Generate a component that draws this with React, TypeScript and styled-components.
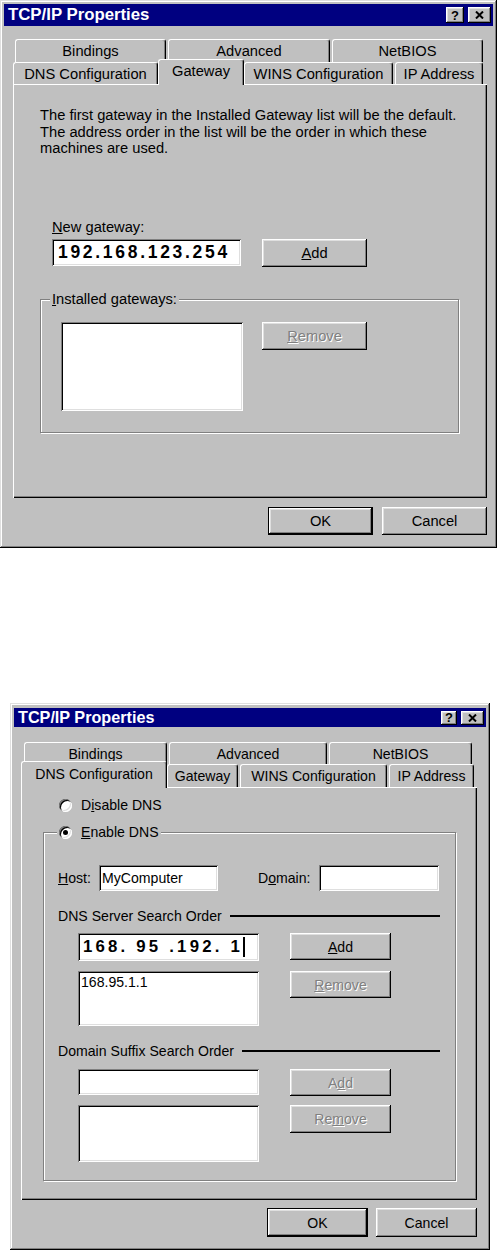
import React from 'react';
import styled, { createGlobalStyle, css } from 'styled-components';

const GlobalStyle = createGlobalStyle`
  html, body { margin: 0; padding: 0; background: #fff; }
  body { font-family: "Liberation Sans", Arial, sans-serif; color: #000; }
  * { box-sizing: border-box; }
`;

const raised = css`
  box-shadow: inset -1px -1px #000, inset 1px 1px #fff, inset -2px -2px #808080, inset 2px 2px #dfdfdf;
`;
const sunken = css`
  box-shadow: inset 1px 1px #808080, inset -1px -1px #fff, inset 2px 2px #000, inset -2px -2px #dfdfdf;
`;

const Page = styled.div`
  display: flex;
  flex-direction: column;
  width: 500px;
`;

const DialogFrame = styled.div<{ $x: number; $mt: number; $w: number; $h: number; $fs: number }>`
  margin-left: ${(p) => p.$x}px;
  margin-top: ${(p) => p.$mt}px;
  width: ${(p) => p.$w}px;
  height: ${(p) => p.$h}px;
  padding: 4px;
  background: #c0c0c0;
  font-size: ${(p) => p.$fs}px;
  display: flex;
  flex-direction: column;
  box-shadow: inset -1px -1px #000, inset 1px 1px #dfdfdf, inset -2px -2px #808080, inset 2px 2px #fff;
`;

const TitleBar = styled.div<{ $h: number; $mt: number; $fs: number }>`
  height: ${(p) => p.$h}px;
  margin-top: ${(p) => p.$mt}px;
  background: #000080;
  color: #fff;
  display: flex;
  align-items: center;
  justify-content: space-between;
  padding: 0 2px 0 4px;
  font-weight: bold;
  font-size: ${(p) => p.$fs}px;
  flex: none;
`;

const TitleText = styled.span`
  white-space: nowrap;
`;

const CaptionButtons = styled.div`
  display: flex;
  gap: 4px;
`;

const CaptionButton = styled.div<{ $w: number; $h: number }>`
  width: ${(p) => p.$w}px;
  height: ${(p) => p.$h}px;
  background: #c0c0c0;
  color: #000;
  ${raised};
  display: flex;
  align-items: center;
  justify-content: center;
  font-size: 13px;
  font-weight: bold;
  line-height: 1;
`;

const Body = styled.div<{ $mt: number; $pl: number }>`
  margin-top: ${(p) => p.$mt}px;
  padding-left: ${(p) => p.$pl}px;
  display: flex;
  flex-direction: column;
`;

const Tabs = styled.div`
  position: relative;
  z-index: 2;
  display: flex;
  flex-direction: column;
`;

const TabRow = styled.div<{ $h: number; $pl: number }>`
  display: flex;
  gap: 2px;
  height: ${(p) => p.$h}px;
  padding-left: ${(p) => p.$pl}px;
  align-items: stretch;
`;

const Tab = styled.div<{ $w: number; $sel?: boolean }>`
  flex: none;
  width: ${(p) => (p.$sel ? p.$w + 4 : p.$w)}px;
  margin: ${(p) => (p.$sel ? '-3px -2px -1px' : '0')};
  position: relative;
  z-index: ${(p) => (p.$sel ? 2 : 1)};
  background: #c0c0c0;
  border-top: 1px solid #fff;
  border-left: 1px solid #fff;
  border-right: 1px solid #000;
  border-radius: 3px 3px 0 0;
  box-shadow: inset -1px 0 #808080;
  display: flex;
  align-items: center;
  justify-content: center;
  padding-bottom: ${(p) => (p.$sel ? 3 : 0)}px;
  white-space: nowrap;
`;

const Panel = styled.div<{ $w: number; $h: number }>`
  position: relative;
  z-index: 1;
  width: ${(p) => p.$w}px;
  height: ${(p) => p.$h}px;
  background: #c0c0c0;
  box-shadow: inset 1px 1px #fff, inset -1px -1px #000, inset -2px -2px #808080;
  display: flex;
  flex-direction: column;
`;

const Footer = styled.div<{ $w: number; $mt: number; $gap: number }>`
  width: ${(p) => p.$w}px;
  margin-top: ${(p) => p.$mt}px;
  display: flex;
  justify-content: flex-end;
  gap: ${(p) => p.$gap}px;
`;

const Button = styled.div<{ $w: number; $h: number; $default?: boolean; $disabled?: boolean }>`
  flex: none;
  width: ${(p) => p.$w}px;
  height: ${(p) => p.$h}px;
  background: #c0c0c0;
  display: flex;
  align-items: center;
  justify-content: center;
  white-space: nowrap;
  color: ${(p) => (p.$disabled ? '#808080' : '#000')};
  text-shadow: ${(p) => (p.$disabled ? '1px 1px 0 #fff' : 'none')};
  ${(p) =>
    p.$default
      ? css`
          box-shadow: inset 0 0 0 1px #000, inset -2px -2px #000, inset 2px 2px #fff, inset -3px -3px #808080,
            inset 3px 3px #dfdfdf;
        `
      : raised};
`;

const U = styled.span`
  text-decoration: underline;
`;

const Field = styled.div<{ $w: number; $h: number; $pl?: number }>`
  flex: none;
  width: ${(p) => p.$w}px;
  height: ${(p) => p.$h}px;
  background: #fff;
  ${sunken};
  display: flex;
  align-items: center;
  padding-left: ${(p) => p.$pl ?? 4}px;
  white-space: nowrap;
`;

const ListBox = styled(Field)`
  align-items: flex-start;
  padding-top: 3px;
`;

const IpText = styled.span<{ $fs: number; $ls: number }>`
  font-weight: bold;
  font-size: ${(p) => p.$fs}px;
  letter-spacing: ${(p) => p.$ls}px;
  white-space: pre;
  display: flex;
  align-items: center;
`;

const Caret = styled.span`
  display: inline-block;
  width: 2px;
  height: 20px;
  background: #000;
`;

const GroupBox = styled.div<{ $ml: number; $mt: number; $w: number; $h: number }>`
  position: relative;
  flex: none;
  margin-left: ${(p) => p.$ml}px;
  margin-top: ${(p) => p.$mt}px;
  width: ${(p) => p.$w}px;
  height: ${(p) => p.$h}px;
  border: 1px solid #808080;
  box-shadow: 1px 1px 0 #fff, inset 1px 1px 0 #fff;
  display: flex;
  flex-direction: column;
`;

const GroupLegend = styled.div<{ $left: number }>`
  position: absolute;
  left: ${(p) => p.$left}px;
  top: -9px;
  padding: 0 2px;
  background: #c0c0c0;
  line-height: 16px;
  display: flex;
  align-items: center;
  white-space: nowrap;
`;

const Row = styled.div<{ $mt?: number; $ml?: number; $gap?: number; $align?: string }>`
  display: flex;
  align-items: ${(p) => p.$align ?? 'center'};
  margin-top: ${(p) => p.$mt ?? 0}px;
  margin-left: ${(p) => p.$ml ?? 0}px;
  gap: ${(p) => p.$gap ?? 0}px;
`;

const Label = styled.span<{ $w?: number; $ml?: number; $mt?: number }>`
  flex: none;
  width: ${(p) => (p.$w ? `${p.$w}px` : 'auto')};
  margin-left: ${(p) => p.$ml ?? 0}px;
  margin-top: ${(p) => p.$mt ?? 0}px;
  line-height: 16px;
  white-space: nowrap;
`;

/* ----- Gateway page ----- */
const GatewayContent = styled.div`
  padding: 23px 0 0 27px;
  display: flex;
  flex-direction: column;
`;

const Description = styled.p`
  margin: 0;
  line-height: 16.5px;
  white-space: nowrap;
`;

const LineHeading = styled.div<{ $mt: number }>`
  display: flex;
  align-items: center;
  margin-top: ${(p) => p.$mt}px;
  line-height: 16px;
  white-space: nowrap;
`;

const Rule = styled.div`
  flex: 1;
  height: 2px;
  background: #000;
  margin-left: 8px;
`;

/* ----- DNS page ----- */
const DnsContent = styled.div`
  padding: 10px 0 0 38px;
  display: flex;
  flex-direction: column;
`;

const RadioRow = styled.div`
  display: flex;
  align-items: center;
  gap: 9px;
  line-height: 16px;
  white-space: nowrap;
`;

const Radio = styled.span<{ $checked?: boolean }>`
  flex: none;
  width: 13px;
  height: 13px;
  border-radius: 50%;
  background: #fff;
  box-shadow: inset 1px 1px #808080, inset -1px -1px #fff, inset 2px 2px #000, inset -2px -2px #dfdfdf;
  display: flex;
  align-items: center;
  justify-content: center;
  &::after {
    content: '';
    width: 5px;
    height: 5px;
    border-radius: 50%;
    background: ${(p) => (p.$checked ? '#000' : 'transparent')};
  }
`;

const GroupInner = styled.div`
  padding: 0 15px 0 14px;
  display: flex;
  flex-direction: column;
`;

const CloseGlyph = () => (
  <svg width="9" height="8" viewBox="0 0 9 8">
    <path d="M1 0.5 L8 7.5 M8 0.5 L1 7.5" stroke="#000" strokeWidth="2" fill="none" />
  </svg>
);

type TabDef = { label: string; w: number; sel?: boolean };

type DialogCfg = {
  x: number;
  mt: number;
  w: number;
  h: number;
  fs: number;
  titleH: number;
  titleMt: number;
  titleFs: number;
  cap: { help: number; close: number; h: number };
  bodyMt: number;
  bodyPl: number;
  back: { h: number; pl: number; tabs: TabDef[] };
  front: { h: number; pl: number; tabs: TabDef[] };
  panelW: number;
  panelH: number;
  footerMt: number;
  btnW: number;
  btnH: number;
  btnGap: number;
};

const Dialog: React.FC<{ cfg: DialogCfg; children: React.ReactNode }> = ({ cfg, children }) => (
  <DialogFrame $x={cfg.x} $mt={cfg.mt} $w={cfg.w} $h={cfg.h} $fs={cfg.fs}>
    <TitleBar $h={cfg.titleH} $mt={cfg.titleMt} $fs={cfg.titleFs}>
      <TitleText>TCP/IP Properties</TitleText>
      <CaptionButtons>
        <CaptionButton $w={cfg.cap.help} $h={cfg.cap.h}>?</CaptionButton>
        <CaptionButton $w={cfg.cap.close} $h={cfg.cap.h}>
          <CloseGlyph />
        </CaptionButton>
      </CaptionButtons>
    </TitleBar>
    <Body $mt={cfg.bodyMt} $pl={cfg.bodyPl}>
      <Tabs>
        <TabRow $h={cfg.back.h} $pl={cfg.back.pl}>
          {cfg.back.tabs.map((t) => (
            <Tab key={t.label} $w={t.w} $sel={t.sel}>
              {t.label}
            </Tab>
          ))}
        </TabRow>
        <TabRow $h={cfg.front.h} $pl={cfg.front.pl}>
          {cfg.front.tabs.map((t) => (
            <Tab key={t.label} $w={t.w} $sel={t.sel}>
              {t.label}
            </Tab>
          ))}
        </TabRow>
      </Tabs>
      <Panel $w={cfg.panelW} $h={cfg.panelH}>
        {children}
      </Panel>
      <Footer $w={cfg.panelW} $mt={cfg.footerMt} $gap={cfg.btnGap}>
        <Button $w={cfg.btnW} $h={cfg.btnH} $default>
          OK
        </Button>
        <Button $w={cfg.btnW} $h={cfg.btnH}>
          Cancel
        </Button>
      </Footer>
    </Body>
  </DialogFrame>
);

const gatewayCfg: DialogCfg = {
  x: 0,
  mt: 0,
  w: 497,
  h: 548,
  fs: 14.7,
  titleH: 22,
  titleMt: 0,
  titleFs: 16.8,
  cap: { help: 18, close: 23, h: 16 },
  bodyMt: 13,
  bodyPl: 9,
  back: {
    h: 23,
    pl: 2,
    tabs: [
      { label: 'Bindings', w: 151 },
      { label: 'Advanced', w: 162 },
      { label: 'NetBIOS', w: 151 },
    ],
  },
  front: {
    h: 22,
    pl: 0,
    tabs: [
      { label: 'DNS Configuration', w: 145 },
      { label: 'Gateway', w: 82, sel: true },
      { label: 'WINS Configuration', w: 149 },
      { label: 'IP Address', w: 88 },
    ],
  },
  panelW: 474,
  panelH: 414,
  footerMt: 9,
  btnW: 105,
  btnH: 28,
  btnGap: 9,
};

const dnsCfg: DialogCfg = {
  x: 10,
  mt: 155,
  w: 480,
  h: 547,
  fs: 14.1,
  titleH: 19,
  titleMt: 1,
  titleFs: 16.2,
  cap: { help: 16, close: 23, h: 14 },
  bodyMt: 15,
  bodyPl: 7,
  back: {
    h: 22,
    pl: 3,
    tabs: [
      { label: 'Bindings', w: 143 },
      { label: 'Advanced', w: 158 },
      { label: 'NetBIOS', w: 143 },
    ],
  },
  front: {
    h: 23,
    pl: 2,
    tabs: [
      { label: 'DNS Configuration', w: 142, sel: true },
      { label: 'Gateway', w: 71 },
      { label: 'WINS Configuration', w: 147 },
      { label: 'IP Address', w: 85 },
    ],
  },
  panelW: 456,
  panelH: 413,
  footerMt: 8,
  btnW: 101,
  btnH: 29,
  btnGap: 8,
};

const GatewayPage = () => (
  <GatewayContent>
    <Description>
      The first gateway in the Installed Gateway list will be the default.
      <br />
      The address order in the list will be the order in which these
      <br />
      machines are used.
    </Description>
    <Label $ml={12} $mt={62}>
      <U>N</U>ew gateway:
    </Label>
    <Row $mt={4} $ml={12} $gap={21} $align="flex-start">
      <Field $w={189} $h={27} $pl={6}>
        <IpText $fs={17.5} $ls={2.7}>192.168.123.254</IpText>
      </Field>
      <Button $w={105} $h={28}>
        <U>A</U>dd
      </Button>
    </Row>
    <GroupBox $ml={0} $mt={32} $w={419} $h={134}>
      <GroupLegend $left={9}>
        <U>I</U>nstalled gateways:
      </GroupLegend>
      <Row $mt={22} $ml={20} $gap={19} $align="flex-start">
        <ListBox $w={182} $h={89} />
        <Button $w={105} $h={28} $disabled>
          <U>R</U>emove
        </Button>
      </Row>
    </GroupBox>
  </GatewayContent>
);

const DnsPage = () => (
  <DnsContent>
    <RadioRow>
      <Radio />
      <span>
        D<U>i</U>sable DNS
      </span>
    </RadioRow>
    <GroupBox $ml={-16} $mt={19} $w={413} $h={349}>
      <GroupLegend $left={13}>
        <RadioRow>
          <Radio $checked />
          <span>
            <U>E</U>nable DNS
          </span>
        </RadioRow>
      </GroupLegend>
      <GroupInner>
        <Row $mt={32}>
          <Label $w={41}>
            <U>H</U>ost:
          </Label>
          <Field $w={119} $h={26} $pl={3}>
            MyComputer
          </Field>
          <Label $w={61} $ml={40}>
            D<U>o</U>main:
          </Label>
          <Field $w={120} $h={26} />
        </Row>
        <LineHeading $mt={17}>
          DNS Server Search Order
          <Rule />
        </LineHeading>
        <Row $mt={9} $ml={20} $gap={31} $align="flex-start">
          <Field $w={181} $h={28} $pl={5}>
            <IpText $fs={16.8} $ls={3.2}>
              168. 95 .192. 1<Caret />
            </IpText>
          </Field>
          <Button $w={101} $h={27}>
            <U>A</U>dd
          </Button>
        </Row>
        <Row $mt={10} $ml={20} $gap={31} $align="flex-start">
          <ListBox $w={181} $h={55} $pl={3}>
            168.95.1.1
          </ListBox>
          <Button $w={101} $h={27} $disabled>
            <U>R</U>emove
          </Button>
        </Row>
        <LineHeading $mt={17}>
          Domain Suffix Search Order
          <Rule />
        </LineHeading>
        <Row $mt={10} $ml={20} $gap={31} $align="flex-start">
          <Field $w={181} $h={26} />
          <Button $w={101} $h={27} $disabled>
            A<U>d</U>d
          </Button>
        </Row>
        <Row $mt={9} $ml={20} $gap={31} $align="flex-start">
          <ListBox $w={181} $h={57} />
          <Button $w={101} $h={28} $disabled>
            Re<U>m</U>ove
          </Button>
        </Row>
      </GroupInner>
    </GroupBox>
  </DnsContent>
);

export default function App() {
  return (
    <>
      <GlobalStyle />
      <Page>
        <Dialog cfg={gatewayCfg}>
          <GatewayPage />
        </Dialog>
        <Dialog cfg={dnsCfg}>
          <DnsPage />
        </Dialog>
      </Page>
    </>
  );
}
